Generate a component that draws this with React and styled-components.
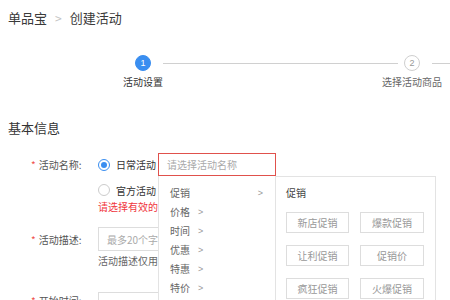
import styled, { createGlobalStyle } from 'styled-components'

const GlobalStyle = createGlobalStyle`
  html, body {
    margin: 0;
    padding: 0;
    background: #ffffff;
  }
  body {
    font-family: 'Noto Sans CJK SC', 'Noto Sans', sans-serif;
    color: #333333;
  }
`

const Page = styled.div`
  width: 450px;
  height: 300px;
  overflow: hidden;
  position: relative;
  background: #ffffff;
`

const Breadcrumb = styled.div`
  height: 34px;
  padding-left: 8px;
  display: flex;
  align-items: center;
  gap: 8px;
  font-size: 13px;
  color: #3a3a3a;

  .sep {
    color: #c4c4c4;
    font-size: 12px;
  }
`

const Steps = styled.div`
  margin-top: 21px;
  padding-left: 123px;
  display: flex;
  align-items: flex-start;
`

const Step = styled.div`
  width: ${(p) => p.$width}px;
  flex-shrink: 0;
  display: flex;
  flex-direction: column;
  align-items: center;
  gap: 4px;
`

const Circle = styled.div`
  width: 16px;
  height: 16px;
  box-sizing: border-box;
  border-radius: 50%;
  display: flex;
  align-items: center;
  justify-content: center;
  font-size: 9px;
  font-family: 'Liberation Sans', sans-serif;
  background: ${(p) => (p.$active ? '#3a8ef0' : '#ffffff')};
  color: ${(p) => (p.$active ? '#ffffff' : '#999999')};
  border: 1px solid ${(p) => (p.$active ? '#3a8ef0' : '#cfcfcf')};
`

const StepLabel = styled.div`
  font-size: 10px;
  line-height: 14px;
  white-space: nowrap;
  color: ${(p) => (p.$active ? '#333333' : '#666666')};
`

const Connector = styled.div`
  height: 1px;
  background: #d0d0d0;
  margin-top: 8px;
  flex-shrink: 0;
  width: ${(p) => (p.$width ? `${p.$width}px` : 'auto')};
  flex-grow: ${(p) => (p.$width ? 0 : 1)};
  margin-left: ${(p) => p.$ml || 0}px;
  margin-right: ${(p) => p.$mr || 0}px;
`

const SectionTitle = styled.div`
  margin-top: 30px;
  padding-left: 8px;
  font-size: 13px;
  line-height: 18px;
  color: #333333;
`

const Form = styled.div`
  margin-top: 16px;
  display: flex;
  flex-direction: column;
`

const FormRow = styled.div`
  display: flex;
  align-items: flex-start;
  margin-top: ${(p) => p.$mt || 0}px;
`

const Label = styled.div`
  width: 88px;
  flex-shrink: 0;
  padding-left: 31px;
  box-sizing: border-box;
  font-size: 10px;
  color: #555555;
  height: ${(p) => p.$h}px;
  display: flex;
  align-items: center;
  gap: 3px;

  .star {
    color: #f0504a;
  }
`

const Controls = styled.div`
  margin-left: 10px;
  display: flex;
  flex-direction: column;
`

const OptionLine = styled.div`
  display: flex;
  align-items: center;
  gap: 4px;
  height: ${(p) => p.$h}px;
  margin-top: ${(p) => p.$mt || 0}px;
`

const Radio = styled.span`
  width: 12px;
  height: 12px;
  box-sizing: border-box;
  border-radius: 50%;
  border: 1px solid ${(p) => (p.$checked ? '#3a8ef0' : '#cccccc')};
  display: flex;
  align-items: center;
  justify-content: center;
  background: #ffffff;

  &::after {
    content: '';
    width: 6px;
    height: 6px;
    border-radius: 50%;
    background: ${(p) => (p.$checked ? '#3a8ef0' : 'transparent')};
  }
`

const OptionText = styled.span`
  font-size: 10px;
  color: #333333;
  white-space: nowrap;
  margin-left: 2px;
`

const NameInput = styled.div`
  margin-left: -2px;
  width: 118px;
  height: 23px;
  box-sizing: border-box;
  border: 1px solid #e0514c;
  padding-left: 8px;
  display: flex;
  align-items: center;
  font-size: 10px;
  color: #aaaaaa;
  white-space: nowrap;
  overflow: hidden;
`

const ErrorText = styled.div`
  font-size: 10px;
  line-height: 14px;
  color: #f0363c;
  white-space: nowrap;
`

const TextInput = styled.div`
  width: 200px;
  height: 24px;
  box-sizing: border-box;
  border: 1px solid #dddddd;
  padding-left: 8px;
  display: flex;
  align-items: center;
  font-size: 10px;
  color: ${(p) => (p.$filled ? '#333333' : '#aaaaaa')};
  white-space: nowrap;
`

const HelpText = styled.div`
  margin-top: 3px;
  font-size: 10px;
  line-height: 14px;
  color: #666666;
  white-space: nowrap;
`

const Dropdown = styled.div`
  position: absolute;
  left: 158px;
  top: 176px;
  display: flex;
  align-items: flex-start;
`

const Menu = styled.div`
  width: 117px;
  height: 140px;
  box-sizing: border-box;
  border-left: 1px solid #e3e3e3;
  background: #ffffff;
  padding-top: 7px;
  display: flex;
  flex-direction: column;
`

const MenuItem = styled.div`
  height: 19.6px;
  display: flex;
  align-items: center;
  padding: 0 12px 0 11px;
  font-size: 10px;
  color: #666666;
  justify-content: ${(p) => (p.$wide ? 'space-between' : 'flex-start')};
  gap: 8px;

  .arrow {
    font-family: 'Liberation Sans', sans-serif;
    font-size: 9px;
    color: #999999;
  }
`

const SubPanel = styled.div`
  width: 161px;
  height: 140px;
  box-sizing: border-box;
  border: 1px solid #e3e3e3;
  background: #ffffff;
  padding: 7px 11px 0 10px;
`

const SubTitle = styled.div`
  font-size: 10px;
  line-height: 18px;
  color: #444444;
`

const ButtonGrid = styled.div`
  margin-top: 10px;
  display: grid;
  grid-template-columns: 63px 64px;
  column-gap: 11px;
  row-gap: 12px;
`

const TagButton = styled.div`
  height: 21px;
  box-sizing: border-box;
  border: 1px solid #dddddd;
  display: flex;
  align-items: center;
  justify-content: center;
  font-size: 10px;
  color: #999999;
`

const menuItems = ['价格', '时间', '优惠', '特惠', '特价', '折扣']
const tags = ['新店促销', '爆款促销', '让利促销', '促销价', '疯狂促销', '火爆促销']

export default function App() {
  return (
    <Page>
      <GlobalStyle />
      <Breadcrumb>
        <span>单品宝</span>
        <span className='sep'>&gt;</span>
        <span>创建活动</span>
      </Breadcrumb>

      <Steps>
        <Step $width={40}>
          <Circle $active>1</Circle>
          <StepLabel $active>活动设置</StepLabel>
        </Step>
        <Connector $width={235} $mr={-16} />
        <Step $width={60}>
          <Circle>2</Circle>
          <StepLabel>选择活动商品</StepLabel>
        </Step>
        <Connector $ml={-10} />
      </Steps>

      <SectionTitle>基本信息</SectionTitle>

      <Form>
        <FormRow>
          <Label $h={23}>
            <span className='star'>*</span>
            <span>活动名称:</span>
          </Label>
          <Controls>
            <OptionLine $h={23}>
              <Radio $checked />
              <OptionText>日常活动</OptionText>
              <NameInput>请选择活动名称</NameInput>
            </OptionLine>
            <OptionLine $h={20} $mt={4}>
              <Radio />
              <OptionText>官方活动</OptionText>
            </OptionLine>
            <ErrorText>请选择有效的活动名称</ErrorText>
          </Controls>
        </FormRow>

        <FormRow $mt={13}>
          <Label $h={24}>
            <span className='star'>*</span>
            <span>活动描述:</span>
          </Label>
          <Controls>
            <TextInput>最多20个字</TextInput>
            <HelpText>活动描述仅用于商家自己管理活动</HelpText>
          </Controls>
        </FormRow>

        <FormRow $mt={24}>
          <Label $h={16}>
            <span className='star'>*</span>
            <span>开始时间:</span>
          </Label>
          <Controls>
            <TextInput $filled>2019-01-10 10:00:00</TextInput>
          </Controls>
        </FormRow>
      </Form>

      <Dropdown>
        <Menu>
          <MenuItem $wide>
            <span>促销</span>
            <span className='arrow'>&gt;</span>
          </MenuItem>
          {menuItems.map((item) => (
            <MenuItem key={item}>
              <span>{item}</span>
              <span className='arrow'>&gt;</span>
            </MenuItem>
          ))}
        </Menu>
        <SubPanel>
          <SubTitle>促销</SubTitle>
          <ButtonGrid>
            {tags.map((t) => (
              <TagButton key={t}>{t}</TagButton>
            ))}
          </ButtonGrid>
        </SubPanel>
      </Dropdown>
    </Page>
  )
}
